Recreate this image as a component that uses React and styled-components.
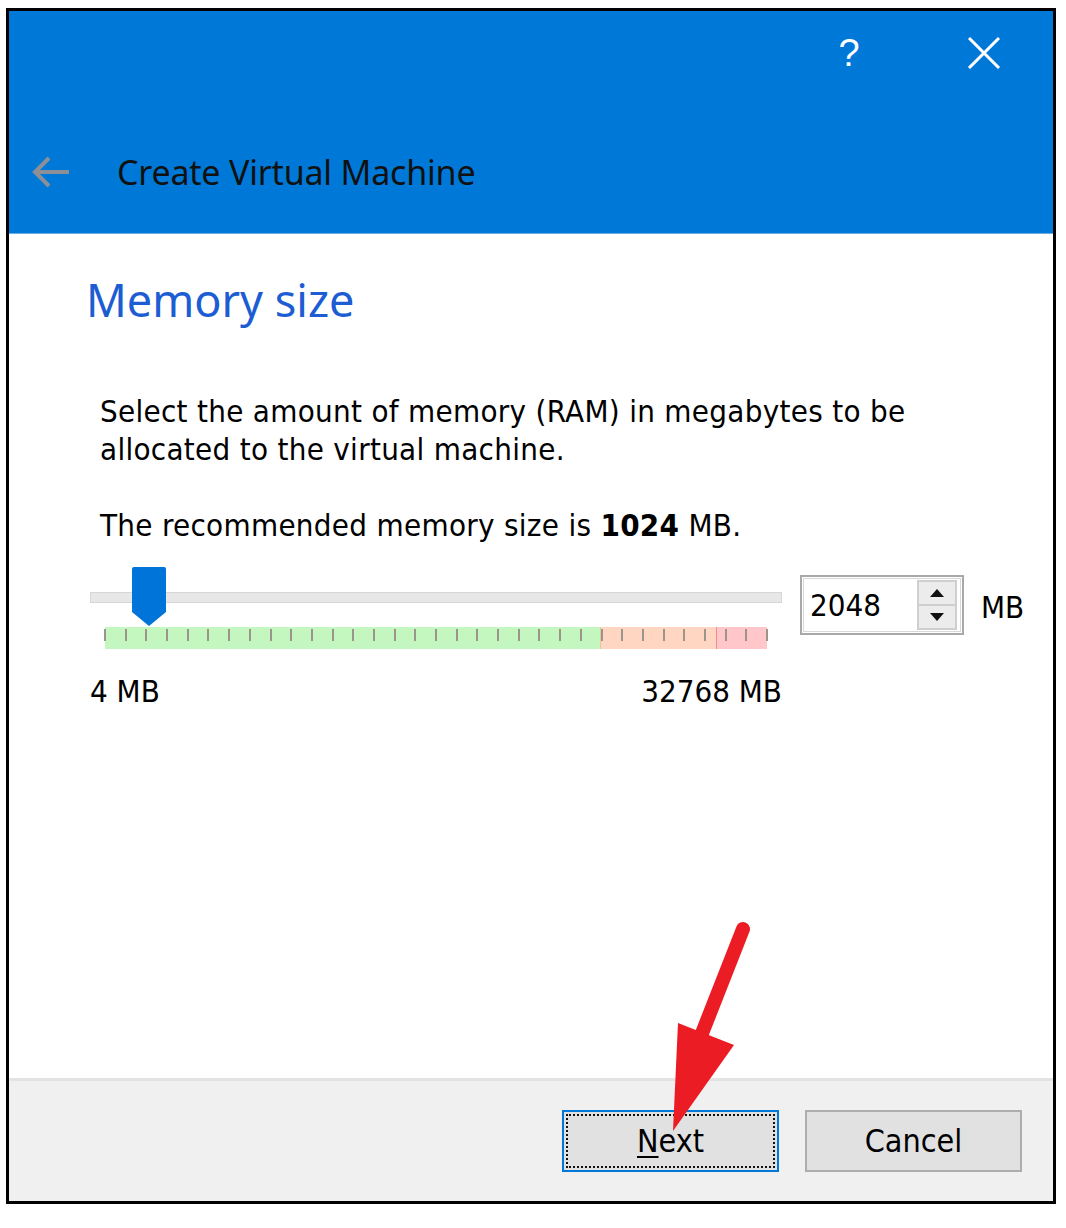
import React from 'react'
import styled, { createGlobalStyle } from 'styled-components'

const GlobalStyle = createGlobalStyle`
  html, body {
    margin: 0;
    padding: 0;
    background: #ffffff;
  }
  body {
    font-family: "DejaVu Sans Condensed", "DejaVu Sans", sans-serif;
    color: #000;
  }
`

const Page = styled.div`
  width: 1066px;
  height: 1228px;
  padding: 8px 0 0 6px;
  box-sizing: border-box;
`

const Dialog = styled.div`
  position: relative;
  width: 1050px;
  height: 1196px;
  box-sizing: border-box;
  border: 3px solid #000;
  display: flex;
  flex-direction: column;
  background: #fff;
`

const Header = styled.div`
  height: 222px;
  background: #0078d7;
  border-bottom: 1px solid #6aaee6;
  display: flex;
  flex-direction: column;
  flex-shrink: 0;
`

const TopBar = styled.div`
  display: flex;
  justify-content: flex-end;
  align-items: flex-start;
  height: 116px;
  padding: 12px 27px 0 0;
  box-sizing: border-box;
  gap: 63px;
`

const CaptionButton = styled.div`
  width: ${p => p.$w}px;
  height: 60px;
  display: flex;
  align-items: center;
  justify-content: center;
  color: #fff;
  font-family: "Liberation Sans", sans-serif;
  font-size: 38px;
`

const TitleRow = styled.div`
  display: flex;
  align-items: center;
  padding-left: 22px;
  height: 90px;
`

const Title = styled.h1`
  margin: 0 0 0 46px;
  font-family: "Noto Sans", sans-serif;
  font-weight: 400;
  font-size: 34px;
  color: #111;
  letter-spacing: -0.2px;
`

const Content = styled.div`
  flex: 1;
  padding: 36px 0 0 77px;
`

const Heading = styled.h2`
  margin: 0;
  font-family: "Noto Sans", sans-serif;
  font-weight: 400;
  font-size: 45px;
  color: #1c5dd3;
  line-height: 60px;
`

const Paragraph = styled.p`
  margin: ${p => p.$top}px 0 0 14px;
  font-size: 31px;
  line-height: 38px;
  width: 860px;
  letter-spacing: 0.3px;

  b {
    font-weight: 700;
  }
`

const SliderRow = styled.div`
  display: flex;
  align-items: flex-start;
  margin: 23px 0 0 4px;
`

const SliderBox = styled.div`
  width: 692px;
  display: flex;
  flex-direction: column;
`

const TrackZone = styled.div`
  position: relative;
  height: 60px;
  display: flex;
  align-items: center;
`

const Track = styled.div`
  width: 100%;
  height: 9px;
  background: #e7e7e7;
  border: 1px solid #d6d6d6;
`

const Thumb = styled.svg`
  position: absolute;
  left: 42px;
  top: 0;
`

const Scale = styled.div`
  position: relative;
  margin: 0 15px;
  height: 22px;
  display: flex;
`

const Zone = styled.div`
  flex: ${p => p.$flex};
  background: ${p => p.$bg};
  border-left: ${p => (p.$edge ? `1px solid ${p.$edge}` : 'none')};
`

const Tick = styled.span`
  position: absolute;
  top: 2px;
  width: 2px;
  height: 12px;
  background: #9c958c;
`

const Limits = styled.div`
  display: flex;
  justify-content: space-between;
  margin-top: 24px;
  font-size: 31px;
`

const SpinBox = styled.div`
  margin-left: 18px;
  margin-top: 8px;
  width: 164px;
  height: 60px;
  box-sizing: border-box;
  border: 2px solid #a9a9a9;
  outline: 1px solid #d9d9d9;
  outline-offset: -4px;
  display: flex;
  align-items: center;
  padding: 3px 5px 3px 8px;
`

const SpinValue = styled.span`
  flex: 1;
  font-size: 31px;
`

const SpinButtons = styled.div`
  width: 40px;
  height: 100%;
  display: flex;
  flex-direction: column;
  border: 2px solid #cfcfcf;
  box-sizing: border-box;
  background: #ececec;
`

const SpinButton = styled.div`
  flex: 1;
  display: flex;
  align-items: center;
  justify-content: center;
  border-top: ${p => (p.$lower ? '2px solid #cfcfcf' : 'none')};
`

const Unit = styled.span`
  margin: 22px 0 0 17px;
  font-size: 31px;
`

const Footer = styled.div`
  height: 120px;
  flex-shrink: 0;
  background: #f0f0f0;
  border-top: 3px solid #e3e3e3;
  display: flex;
  justify-content: flex-end;
  align-items: center;
  padding-right: 31px;
  gap: 26px;
`

const Button = styled.div`
  width: 217px;
  height: 62px;
  box-sizing: border-box;
  background: #e1e1e1;
  border: 2px solid ${p => (p.$default ? '#0078d7' : '#adadad')};
  display: flex;
  align-items: center;
  justify-content: center;
  font-size: 32px;
  position: relative;

  &::after {
    content: '';
    display: ${p => (p.$default ? 'block' : 'none')};
    position: absolute;
    inset: 2px;
    border: 2px dotted #111;
  }

  u {
    text-decoration-thickness: 2px;
    text-underline-offset: 4px;
  }
`

const Pointer = styled.svg`
  position: absolute;
  left: 0;
  top: 0;
  pointer-events: none;
`

const TICKS = 33

export default function App() {
  const ticks = Array.from({ length: TICKS }, (_, i) => i)
  return (
    <>
      <GlobalStyle />
      <Page>
        <Dialog>
          <Header>
            <TopBar>
              <CaptionButton $w={60}>?</CaptionButton>
              <CaptionButton $w={84}>
                <svg width="34" height="32" viewBox="0 0 34 32">
                  <path d="M2 1 L32 31 M32 1 L2 31" stroke="#fff" strokeWidth="3" />
                </svg>
              </CaptionButton>
            </TopBar>
            <TitleRow>
              <svg width="40" height="34" viewBox="0 0 40 34">
                <path d="M38 17 H4 M18 3 L4 17 L18 31" stroke="#8c8f96" strokeWidth="4" fill="none" />
              </svg>
              <Title>Create Virtual Machine</Title>
            </TitleRow>
          </Header>

          <Content>
            <Heading>Memory size</Heading>
            <Paragraph $top={62}>
              Select the amount of memory (RAM) in megabytes to be allocated to the virtual machine.
            </Paragraph>
            <Paragraph $top={38}>
              The recommended memory size is <b>1024</b> MB.
            </Paragraph>

            <SliderRow>
              <SliderBox>
                <TrackZone>
                  <Track />
                  <Thumb width="34" height="60" viewBox="0 0 34 60">
                    <path d="M0 2 Q0 0 2 0 H32 Q34 0 34 2 V45 L17 59 L0 45 Z" fill="#0074d9" />
                  </Thumb>
                </TrackZone>
                <Scale>
                  <Zone $flex={496} $bg="#c4f7c0" />
                  <Zone $flex={116} $bg="#ffd6c2" $edge="#e9c79a" />
                  <Zone $flex={50} $bg="#ffc7c9" $edge="#f58a8a" />
                  {ticks.map(i => (
                    <Tick key={i} style={{ left: `calc(${(i / (TICKS - 1)) * 100}% - 1px)` }} />
                  ))}
                </Scale>
                <Limits>
                  <span>4 MB</span>
                  <span>32768 MB</span>
                </Limits>
              </SliderBox>

              <SpinBox>
                <SpinValue>2048</SpinValue>
                <SpinButtons>
                  <SpinButton>
                    <svg width="14" height="8" viewBox="0 0 14 8">
                      <path d="M7 0 L14 8 H0 Z" fill="#111" />
                    </svg>
                  </SpinButton>
                  <SpinButton $lower>
                    <svg width="14" height="8" viewBox="0 0 14 8">
                      <path d="M0 0 H14 L7 8 Z" fill="#111" />
                    </svg>
                  </SpinButton>
                </SpinButtons>
              </SpinBox>
              <Unit>MB</Unit>
            </SliderRow>
          </Content>

          <Footer>
            <Button $default>
              <span><u>N</u>ext</span>
            </Button>
            <Button>Cancel</Button>
          </Footer>

          <Pointer width="1050" height="1196" viewBox="0 0 1050 1196">
            <path
              d="M734 918 L690 1030"
              stroke="#ec1c24"
              strokeWidth="14"
              strokeLinecap="round"
              fill="none"
            />
            <path d="M669 1012 L725 1034 L664 1120 Z" fill="#ec1c24" />
          </Pointer>
        </Dialog>
      </Page>
    </>
  )
}
